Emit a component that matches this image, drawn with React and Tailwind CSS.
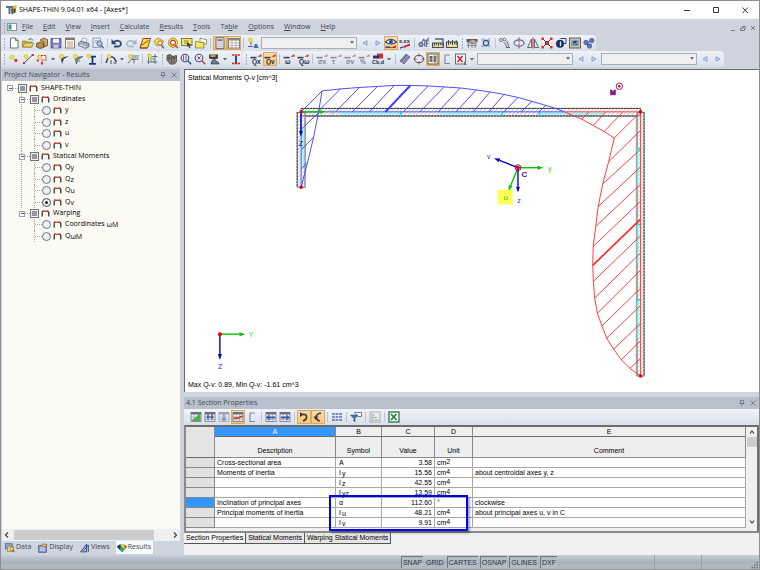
import React from "react";

const UI = "font-['Open_Sans',sans-serif]";
const ARIAL = "font-['Liberation_Sans',Arial,sans-serif]";

/* ---------- small toolbar glyphs, drawn on a 14 x 14 grid ---------- */
const spark = (x, y) => (
  <g>
    <circle cx={x} cy={y} r="2" fill="#f3e64a" stroke="#b9a520" strokeWidth=".5" />
  </g>
);
const redWedge = <path d="M1.500 4.800h7L12.500 2v2.800z" fill="#c8332e" />;
const darkBar = <rect x="1.500" y="4.800" width="6" height="1.600" fill="#39405a" />;
const sub = (label, color = "#26304c") => (
  <text x="3" y="12.200" fontSize="6.500" fontWeight="bold" fill={color} fontFamily="Liberation Sans, sans-serif">{label}</text>
);
const sheet = (
  <g>
    <rect x="2" y="2.500" width="10" height="9" fill="#eef0f4" stroke="#6d7480" strokeWidth=".8" />
    <path d="M2 4.500h10M2 7h10M2 9.300h10M5.200 2.500v9M8.600 2.500v9" stroke="#8c93a0" strokeWidth=".6" />
    <rect x="2" y="2.300" width="10" height="1.600" fill="#5d6470" />
  </g>
);

const glyphs = {
  app: <g><path d="M1 3h7v2H5.500v6H3.500V5H1z" fill="#5b6f97" /><path d="M6 4.500l5-2.500v7l-4 2.500z" fill="#8a7a5a" /><path d="M8 4l3-2 1.500 2-3 2z" fill="#e9c63c" /><path d="M7 6v5M9.500 6v4" stroke="#3e3a30" /></g>,
  doc: <path d="M3.500 2h5l2.500 2.500V12H3.500zM8.500 2v2.500H11" fill="#fff" stroke="#4d5462" strokeWidth=".8" />,
  open: <g><path d="M1.500 11V5h3.500l1 1h5v5z" fill="#d9b63a" stroke="#7c6412" strokeWidth=".6" /><path d="M1.500 11l2.500-4h9l-2.500 4z" fill="#f0d568" stroke="#7c6412" strokeWidth=".6" /><path d="M7.500 3.500q3-2.500 4.500 1" fill="none" stroke="#3a6a38" strokeWidth="1" /></g>,
  box: <g><path d="M1.500 7.500l4-1.500 3 1v4.500l-3.500 1-3.500-1.500z" fill="#b98d43" stroke="#4f3a14" strokeWidth=".7" /><path d="M5 4l4-2 3.500 1.500v6L9 11V6z" fill="#d9a856" stroke="#4f3a14" strokeWidth=".7" /></g>,
  save: <g><rect x="2" y="2.500" width="10" height="9.500" fill="#7a76b4" stroke="#4b4786" strokeWidth=".7" /><rect x="4" y="2.800" width="6" height="4" fill="#f2f3f8" /><rect x="4.500" y="8.500" width="5" height="3.300" fill="#c5c7dc" /></g>,
  list: <g><rect x="2.500" y="2" width="9" height="10" fill="#fbf7ec" stroke="#6e655a" strokeWidth=".8" /><rect x="2.500" y="2" width="9" height="2" fill="#8a7766" /><path d="M4 6h6M4 8h6M4 10h6" stroke="#a48f7b" strokeWidth=".8" /></g>,
  print: <g><path d="M4 6l2-4 4 1-1 4z" fill="#fff" stroke="#777e92" strokeWidth=".6" /><path d="M1.500 7l3-2 7.500 2.500v3L8.500 12.500l-7-3z" fill="#a7aebf" stroke="#515a72" strokeWidth=".7" /><path d="M3 9l5.500 2" stroke="#e9ecf4" /></g>,
  preview: <g><rect x="2" y="2" width="7.500" height="9.500" fill="#e6ecf5" stroke="#76819a" strokeWidth=".7" /><path d="M3.500 4.500h4M3.500 6.500h3" stroke="#8fa0bd" strokeWidth=".7" /><circle cx="8.500" cy="7.500" r="2.600" fill="#a9c4e8" stroke="#49648f" strokeWidth=".9" /><path d="M10.300 9.500l2.200 2.700" stroke="#49648f" strokeWidth="1.400" /></g>,
  undo: <g><path d="M3.500 6.500q3.500-3.500 7-.500 1.500 3.500-2 4.500H4" fill="none" stroke="#2c4a79" strokeWidth="1.800" /><path d="M1.500 3v5.200h5.200z" fill="#2c4a79" /></g>,
  redo: <g><path d="M10.500 6.500q-3.500-3.500-7-.500-1.500 3.500 2 4.500H10" fill="none" stroke="#a7b5c9" strokeWidth="1.600" /><path d="M12.500 3v5.200H7.300z" fill="#a7b5c9" /></g>,
  para: <g><path d="M2 12l3-9.500h7.500l-3 9.500z" fill="#f7e548" stroke="#3a3626" strokeWidth=".8" /><path d="M3 9.500L10.500 4.500" stroke="#ca2920" strokeWidth="1" /><path d="M5 2.500h7.500M2 12h7" stroke="#ca2920" strokeWidth="1.100" /></g>,
  lens: <g><path d="M2 5l4-3 5.500 3-2 4-5 .5z" fill="#f7e548" stroke="#8c7a1c" strokeWidth=".7" /><circle cx="8" cy="7" r="2.200" fill="#fff6b0" stroke="#a63f2a" strokeWidth=".8" /><path d="M9.500 9l2.500 3.300" stroke="#6b5a30" strokeWidth="1.300" /></g>,
  target: <g><circle cx="7" cy="6.700" r="4.600" fill="#f7e548" stroke="#a1861c" strokeWidth=".9" /><circle cx="7" cy="6.700" r="2.400" fill="#fff" stroke="#c73227" strokeWidth="1.100" /><path d="M9 9.500l3 2.500" stroke="#c73227" strokeWidth="1.200" /></g>,
  screen: <g><rect x="1.500" y="2.500" width="10.500" height="7" fill="#f5e761" stroke="#6b6325" strokeWidth=".8" /><path d="M4 5h5M4 7h3" stroke="#6b6325" strokeWidth=".7" /><path d="M7 6l4.500 3-2 .3 1 2.500-1.200.4-1-2.400L7 11z" fill="#3d4252" /></g>,
  folders: <g><path d="M1.500 5.500h3l1 1H10V12H1.500z" fill="#f4e466" stroke="#7d7123" strokeWidth=".7" /><path d="M6 2.500h2.500l.8.8H12.500V8H10V6.500H6z" fill="#fff" stroke="#7d7123" strokeWidth=".7" /></g>,
  calc: <g><rect x="3" y="1.800" width="8" height="10.500" fill="#f6f6f6" stroke="#55545a" strokeWidth=".9" /><rect x="4.300" y="3.200" width="5.400" height="2" fill="#75808c" /><path d="M4.500 6.800h5M4.500 8.600h5M4.500 10.400h5" stroke="#777" strokeWidth=".9" strokeDasharray="1 1" /></g>,
  table: <g><rect x="1.500" y="2.500" width="11" height="9.500" fill="#fff" stroke="#6a6660" strokeWidth=".8" /><rect x="1.500" y="2.500" width="11" height="2" fill="#8b857c" /><path d="M1.500 7h11M1.500 9.500h11M5 4v8M9 4v8" stroke="#958f87" strokeWidth=".6" /></g>,
  load: <g>{spark(4.500, 4)}<path d="M5 6v3M2 10.500h5" stroke="#566078" strokeWidth="1" /><path d="M7.500 12L9 8h2l1.500 4z" fill="#4d6fae" /></g>,
  eye: <g><path d="M1.500 6q5-5.500 11 0-5 4-11 0z" fill="#fff" stroke="#243a70" strokeWidth="1.100" /><circle cx="7" cy="5.700" r="2" fill="#2c4b95" /><path d="M2 12h3.500l6.500-2.500V12z" fill="#c7322a" /><path d="M1.500 10.500h5V12h-5z" fill="#2c4b95" /></g>,
  xxx: <g><text x="1" y="6.500" fontSize="5.500" fontWeight="bold" fill="#26304c" fontFamily="Liberation Sans, sans-serif">x.xx</text><path d="M2 11.500L12 7.500v2.200L7 11.500z" fill="#c8332e" /><path d="M2 11h4l-4 2z" fill="#3c5ea8" /></g>,
  cut: <g><path d="M5 6.500l1.500-3 1.500 1-.5 6M9 5l3-3M9.500 11V5h2.500M9.500 7.500h2" fill="none" stroke="#5c6a8e" strokeWidth="1.200" /><circle cx="4" cy="8.500" r="2.200" fill="#8d9ab8" stroke="#3c4968" strokeWidth=".7" /></g>,
  ruler1: <g><path d="M4 3h8v4" fill="none" stroke="#555c6a" strokeWidth="1.300" /><rect x="1.500" y="7" width="11" height="4.500" fill="#e9d98e" stroke="#343d55" strokeWidth=".9" /><path d="M3.500 7v3M5.500 7v2M7.500 7v3M9.500 7v2M11.200 7v3" stroke="#343d55" strokeWidth=".8" /></g>,
  ruler2: <g><rect x="1.500" y="6" width="11" height="5.500" fill="#e9e08e" stroke="#343d55" strokeWidth=".9" /><path d="M3.500 4v5M5.500 6v2M7.500 4v5M9.500 6v2M11.200 4v5" stroke="#343d55" strokeWidth=".9" /></g>,
  hand: <g><rect x="1.500" y="3" width="11" height="3" fill="#555b66" /><path d="M2 7h10M2 9.500h10M3.500 6v6M7 6v6M10 6v6" stroke="#7c8290" strokeWidth=".9" /><path d="M3.500 5q4-3 8.500 0l-3 2.500-3.500-1z" fill="#d4ab87" stroke="#5a4a3a" strokeWidth=".6" /></g>,
  gear: <g><path d="M2 4h10M2 10h10M4 2v10M10 2v10" stroke="#767e92" strokeWidth=".8" strokeDasharray="1.500 1" /><circle cx="7" cy="7" r="2.600" fill="#cfd9ee" stroke="#355294" strokeWidth="1.100" /></g>,
  link: <g><circle cx="3" cy="4" r="1.500" fill="#fff" stroke="#4b4f5a" strokeWidth=".8" /><circle cx="6.500" cy="3.500" r="1.300" fill="#fff" stroke="#4b4f5a" strokeWidth=".8" /><path d="M8 4.500q2.500 2 2.500 6M5.500 6.500q2.500 0 3 4.500M8 11.500h4" fill="none" stroke="#4b4f5a" strokeWidth=".9" /></g>,
  spin: <g><ellipse cx="7" cy="7" rx="5" ry="3.200" fill="none" stroke="#4f6ea6" strokeWidth="1.200" /><path d="M7 1.500v11" stroke="#c8332e" strokeWidth="1.100" strokeDasharray="2 1" /></g>,
  mirror: <g><path d="M1.500 11.500L5.500 3v8.500zM12.500 11.500L8.500 3v8.500z" fill="#e8eaf0" stroke="#555b6a" strokeWidth=".9" /><path d="M7 1.500v11" stroke="#c8332e" strokeWidth="1.100" /></g>,
  scale: <g><path d="M2.500 2.500l9 9M11.500 2.500l-9 9" stroke="#3c3f48" strokeWidth="1" /><path d="M1.500 1.500h2.400v2.400H1.500zM10.100 1.500h2.400v2.400h-2.400zM1.500 10.100h2.400v2.400H1.500zM10.100 10.100h2.400v2.400h-2.400z" fill="#e02a20" /><rect x="5.200" y="5.200" width="3.600" height="3.600" fill="#c23a34" stroke="#5a2826" strokeWidth=".5" /></g>,
  sphere: <g><path d="M6.500 2.500h5.500v5H9" fill="#e9ebf2" stroke="#202a5a" strokeWidth=".9" /><circle cx="6" cy="7.800" r="4" fill="#1f2b66" /><path d="M6.500 5.500v4.500" stroke="#dfe5ff" strokeWidth="1.300" /></g>,
  photo: <g><rect x="1.500" y="2" width="11" height="10" fill="#d8c79d" stroke="#585040" strokeWidth=".9" /><rect x="3" y="3.800" width="8" height="6.500" fill="#86a1cf" /><circle cx="7.300" cy="7" r="2.300" fill="#27406f" /><path d="M6 7.500l1.200 1 2-2.500" stroke="#fff" strokeWidth=".7" fill="none" /></g>,
  balls: <g fill="#6781b8" stroke="#2f457c" strokeWidth=".7"><circle cx="4" cy="6.500" r="2.200" /><circle cx="9.800" cy="4.500" r="2.200" /><circle cx="7.500" cy="10" r="2.200" /><path d="M5 7l3-2M5 8l2 1" /></g>,

  node: <g>{spark(5, 5)}<rect x="7.500" y="7" width="2.800" height="2.800" fill="#d8261c" /></g>,
  line: <g><path d="M3 11L11.500 3" stroke="#4b4f5c" strokeWidth="1" />{spark(5, 4.500)}<rect x="2" y="10" width="2" height="2" fill="#d8261c" /><rect x="10.800" y="2" width="2" height="2" fill="#d8261c" /></g>,
  poly: <g><path d="M3 3.500h8v4.500H7v3.500" fill="none" stroke="#d8261c" strokeWidth="1.100" strokeDasharray="2 1" />{spark(4.500, 5)}<rect x="1.800" y="7.500" width="2" height="2" fill="#d8261c" /><rect x="6" y="10.500" width="2" height="2" fill="#d8261c" /></g>,
  elem: <g><path d="M4 5.500l8-1.500-5 3-2 5-1-4z" fill="#454a56" />{spark(4.500, 4.500)}</g>,
  elem2: <g><path d="M4 5.500l8-1-5 3-1.500 4.500z" fill="#7d828e" stroke="#454a56" strokeWidth=".6" />{spark(4.500, 4.500)}<path d="M7 7l2 3" stroke="#4b9a45" strokeWidth="1" /></g>,
  ibeam: <g><path d="M4 4.700h7M7.500 4v8M4 11.800h7" stroke="#20347c" strokeWidth="1.800" fill="none" />{spark(4, 4)}</g>,
  arc: <g><path d="M2 11l2-5q3-2.500 6 0l2.500 4" fill="none" stroke="#3d424f" strokeWidth="1.500" />{spark(5, 4.500)}<path d="M7 8v4M9.500 11h3" stroke="#3d424f" strokeWidth="1" /></g>,
  tag: <g><path d="M2 11.500l3-4h3v4" fill="none" stroke="#646b7a" strokeWidth="1" />{spark(4.500, 4.500)}<text x="6" y="6" fontSize="4.500" fill="#3d424f" fontFamily="Liberation Sans, sans-serif">xxx</text><path d="M6 7.200h6.500" stroke="#3d424f" strokeWidth=".8" /></g>,
  gridadd: <g><path d="M3.500 2v10M10 2v10M2 10h10.500M5 4.500h7.500" stroke="#646b7a" strokeWidth=".9" />{spark(4.500, 4)}<rect x="6" y="6.500" width="3" height="3" fill="none" stroke="#56954c" strokeWidth=".7" /></g>,
  shear: <g><path d="M2 3.500l3-1 3 2 3.500-1v6l-2 2.500H5L2 8z" fill="#8f887e" stroke="#3f3b36" strokeWidth=".8" /><path d="M4 3v6M6.500 4v7M9 4v7M2 6h9" stroke="#3f3b36" strokeWidth=".7" /></g>,
  zoomBlue: <g><circle cx="6" cy="6" r="3.800" fill="#dbe8fa" stroke="#33539a" strokeWidth="1.100" /><path d="M8.800 8.800l3.400 3.500" stroke="#33539a" strokeWidth="1.500" /><path d="M4.500 3.500v5M7 3.500v5" stroke="#c23a34" strokeWidth=".9" /></g>,
  zoomRed: <g><circle cx="6" cy="6" r="3.800" fill="#f4e9f2" stroke="#33539a" strokeWidth="1.100" /><path d="M8.800 8.800l3.400 3.500" stroke="#c23a34" strokeWidth="1.500" /><path d="M4.500 4.500l3 3M7.500 4.500l-3 3" stroke="#c23a34" strokeWidth="1" /></g>,
  visib: <g><path d="M2 2.500h9v4l-4 1-5-1z" fill="#3c3f48" /><path d="M3.500 4h5" stroke="#f3e64a" strokeWidth="1.300" /><path d="M4 12q0-4 3.500-4.500L12 11v1z" fill="#737986" stroke="#30333b" strokeWidth=".6" /></g>,
  clip: <g><path d="M3 3h8M3 11.500h8" stroke="#d8261c" strokeWidth="1.700" strokeDasharray="2.500 .5" /><path d="M7 4v7" stroke="#24439c" strokeWidth="1.900" /></g>,
  sigma: <g>{redWedge}{darkBar}{sub("Qx")}</g>,
  qv: <g>{redWedge}{darkBar}{sub("Qv")}</g>,
  omega: <g>{redWedge}{darkBar}{sub("ω")}</g>,
  qomega: <g>{redWedge}{darkBar}{sub("Qω")}</g>,
  fsx: <g opacity=".55">{redWedge}{darkBar}{sub("σx")}</g>,
  ftau: <g opacity=".55">{redWedge}{darkBar}{sub("τ")}</g>,
  fsv: <g opacity=".55">{redWedge}{darkBar}{sub("σv")}</g>,
  fpc: <g opacity=".55">{redWedge}{darkBar}{sub("%")}</g>,
  cbd: <g><rect x="6" y="1.500" width="6" height="5" fill="#c8332e" /><rect x="2" y="3.500" width="6" height="3" fill="#26366e" /><text x="1" y="12.200" fontSize="5.500" fontWeight="bold" fill="#26304c" fontFamily="Liberation Sans, sans-serif">Cb,d</text></g>,
  hatch: <g><path d="M2 9l6-7 4 3-6 7z" fill="#8fa6d6" stroke="#4f5b78" strokeWidth=".8" /><path d="M5.500 10.500l5-6" stroke="#c8332e" strokeWidth=".9" /><path d="M3.500 9.500l5.500-6.500" stroke="#26366e" strokeWidth=".8" /></g>,
  ellipse: <g><ellipse cx="7" cy="7" rx="4.500" ry="3.600" fill="none" stroke="#4b4f5c" strokeWidth="1" /><path d="M7 1.500v3M7 9.500v3M1.500 7h3M9.500 7h3" stroke="#c8332e" strokeWidth="1" /></g>,
  palette: <g><rect x="2" y="2" width="10" height="10" fill="#fff" stroke="#4b4536" strokeWidth=".9" /><rect x="3.500" y="4" width="3" height="2" fill="#3565bd" /><rect x="3.500" y="6" width="3" height="2" fill="#48a650" /><rect x="3.500" y="8" width="3" height="2" fill="#d4402c" /><rect x="7.500" y="3.500" width="3" height="7" fill="#77756b" /></g>,
  bracket: <path d="M10 3H5v8.500h5" fill="none" stroke="#838a96" strokeWidth="1.200" />,
  redx: <g><rect x="1.500" y="2" width="10" height="10" fill="#f2f2f4" stroke="#5b606d" strokeWidth=".9" /><path d="M3.500 4l5 6M8.500 4l-5 6" stroke="#cf1f2e" strokeWidth="1.500" /><path d="M10.500 9.500v3h2" stroke="#5b606d" fill="none" strokeWidth=".8" /></g>,

  tGreen: <g>{sheet}<path d="M2.500 11L11.500 3v8z" fill="#4fae4b" /></g>,
  tDown: <g>{sheet}<path d="M5 4.500v5M9 4.500v5M3.500 7h7" stroke="#2d4a92" strokeWidth="1.200" /></g>,
  tFade: <g opacity=".6">{sheet}<path d="M7 4v6M5 8l2 2.500L9 8" stroke="#2d4a92" strokeWidth="1.200" fill="none" /></g>,
  tRed: <g>{sheet}<path d="M2.500 8h5l4-2" stroke="#c8332e" strokeWidth="1.500" fill="none" /></g>,
  tLeft: <g>{sheet}<path d="M2 7.500l3.500-3v2H11v2H5.500v2z" fill="#3a60b4" /></g>,
  tRight: <g>{sheet}<path d="M12 7.500l-3.500-3v2H3v2h5.500v2z" fill="#3a60b4" /></g>,
  curveR: <g><path d="M5 4.500q5-1 4.500 3Q9 10 6 11" fill="none" stroke="#3c3a36" strokeWidth="1.700" /><path d="M3 2l3.500 2.500L3 7z" fill="#3c3a36" /></g>,
  curveL: <g><path d="M10 3Q5 4 5 7.500q1 3 4 3.500" fill="none" stroke="#3c3a36" strokeWidth="1.700" /><path d="M2.500 6.500h5L4.500 10z" fill="#3c3a36" /></g>,
  tCols: <g><path d="M2 4h10M2 7h10M2 10h10" stroke="#5a6ab0" strokeWidth="1.700" /><path d="M5.300 3v8.500M8.600 3v8.500" stroke="#e6e9f2" strokeWidth=".8" /></g>,
  filter: <g><path d="M5.500 2.500h7v4h-4z" fill="#fff" stroke="#5c6272" strokeWidth=".8" /><path d="M1.500 5h7.500L6 8.500V12L4.800 11V8.500z" fill="#3a7ac0" stroke="#29446f" strokeWidth=".5" /></g>,
  tStep: <g opacity=".65"><rect x="2" y="2" width="10" height="10" fill="#eef4ee" stroke="#6f7b76" strokeWidth=".8" /><path d="M4 3v8M4 5h3M4 7.500h5M4 10h7" stroke="#697" strokeWidth="1" /></g>,
  excel: <g><rect x="2" y="2" width="10" height="10" fill="#fff" stroke="#1f7a3c" strokeWidth="1.300" /><path d="M4 4l5.500 6M9.500 4L4 10" stroke="#1f7a3c" strokeWidth="1.700" /></g>,

  data: <g><rect x="1.500" y="2" width="8" height="6" fill="#8fa8da" stroke="#3c5898" strokeWidth=".8" /><path d="M4 5h7v6H4z" fill="#f2da6a" stroke="#806b1c" strokeWidth=".7" /><circle cx="9" cy="8" r="2" fill="#fff3b0" stroke="#8c3030" strokeWidth=".7" /><path d="M10.300 9.500l2 2.500" stroke="#333" /></g>,
  display: <g><rect x="2" y="4" width="9" height="8" fill="#7f9ad2" stroke="#35508e" strokeWidth=".8" /><path d="M3.500 7h6M3.500 9.500h6" stroke="#fff" /><path d="M4 4q4-3.500 8-1l-2 3-4-.5z" fill="#e2a57c" stroke="#7a4e2c" strokeWidth=".6" /></g>,
  views: <g><path d="M2 11.500L9 2.500v9z" fill="#aebfe6" stroke="#28427f" strokeWidth="1.100" /><path d="M5.500 10l5.500-6.500v8" fill="none" stroke="#28427f" strokeWidth="1" /></g>,
  results: <g><path d="M1 5.500Q7 0 13 5.500L7 12z" fill="#32a84a" /><path d="M1 5.500Q3 3 5.500 2.700L5 9.500z" fill="#24348a" /><path d="M5.500 2.700Q10 2 13 5.500L10 8 6 5z" fill="#e6d832" /><path d="M9.500 3.200Q11.500 4 13 5.500L10.500 8z" fill="#d8402a" /><path d="M4.500 7.500L7 12l2.500-3z" fill="#2a9ad0" /></g>,
};

function Glyph({ name, small }) {
  return <svg viewBox="0 0 14 14" className={small ? "h-3 w-3" : "h-[14px] w-[14px]"} aria-hidden="true">{glyphs[name]}</svg>;
}

function Tool({ name, active }) {
  return (
    <button
      aria-label={name}
      className={`h-[14px] w-[14px] flex-none ${active ? "bg-gradient-to-b from-[#fbdcae] to-[#fdc46a] outline outline-1 -outline-offset-1 outline-[#d3ab6c]" : ""}`}
    >
      <Glyph name={name} />
    </button>
  );
}

const Sep = () => <span className="mx-[2px] h-[10px] w-px flex-none bg-[#bcc4d2]" />;
const Grip = () => (
  <span className="flex h-full w-[6px] flex-none flex-col items-center justify-center gap-px">
    {[0, 1, 2, 3].map((i) => <i key={i} className="h-[2px] w-px bg-[#a5aec0]" />)}
  </span>
);
const Drop = () => (
  <button aria-label="More" className="flex h-[14px] w-2 flex-none items-center justify-center">
    <svg viewBox="0 0 4 3" className="h-[3px] w-1"><path d="M0 0h4L2 2.500z" fill="#5c6270" /></svg>
  </button>
);
const Step = ({ dir }) => (
  <button aria-label={dir < 0 ? "Previous" : "Next"} className="flex h-[14px] w-[13px] flex-none items-center justify-center">
    <svg viewBox="0 0 6 6" className="h-[6px] w-[6px]">
      <path d={dir < 0 ? "M5 .8L1 3l4 2.200z" : "M1 .8L5 3 1 5.200z"} fill="#cbdcf8" stroke="#7a98d4" strokeWidth=".9" />
    </svg>
  </button>
);
function Combo({ label }) {
  return (
    <span className="relative mx-px h-3 w-24 min-w-8">
      <select aria-label={label} className="block h-full w-full appearance-none border border-[#a9afb9] bg-[#efefef]" />
      <svg viewBox="0 0 4 3" className="pointer-events-none absolute top-1 right-[3px] h-[3px] w-1"><path d="M0 0h4L2 3z" fill="#6d7380" /></svg>
    </span>
  );
}

function Tools({ items }) {
  return items.map((it, i) => {
    if (it === "|") return <Sep key={i} />;
    if (it === "v") return <Drop key={i} />;
    if (it === "<") return <Step key={i} dir={-1} />;
    if (it === ">") return <Step key={i} dir={1} />;
    if (it === "combo") return <Combo key={i} label={`Selection ${i}`} />;
    const active = it[0] === "*";
    return <Tool key={i} name={active ? it.slice(1) : it} active={active} />;
  });
}

function Strip({ items }) {
  return (
    <div className="flex h-4 min-w-0 items-center rounded-r-sm bg-gradient-to-b from-[#eef2f9] to-[#d9dfea]">
      <Grip />
      <Tools items={items} />
    </div>
  );
}

const bar1a = ["doc", "open", "box", "save", "list", "print", "preview", "|", "undo", "redo", "para", "lens", "target", "screen", "folders", "|", "*calc", "*table", "|", "load", "combo", "<", ">", "*eye", "xxx", "|", "cut", "ruler1", "ruler2"];
const bar1b = ["hand", "gear", "|", "link", "spin", "mirror", "scale", "sphere", "photo", "balls"];
const bar2a = ["node", "line", "poly", "v", "elem", "elem2", "ibeam", "|", "arc", "v", "tag", "|", "gridadd"];
const bar2b = ["shear", "zoomBlue", "zoomRed", "visib", "v", "clip"];
const bar2c = ["sigma", "*qv", "|", "omega", "qomega", "|", "fsx", "ftau", "fsv", "fpc", "cbd", "v", "|", "hatch", "ellipse", "*palette", "bracket", "redx", "v", "combo", "<", ">", "combo", "<", ">"];
const gridTools = ["tGreen", "tDown", "tFade", "*tRed", "bracket", "|", "tLeft", "tRight", "|", "*curveR", "*curveL", "|", "tCols", "|", "filter", "|", "tStep", "|", "excel"];

function TitleBar() {
  return (
    <header className={`flex h-[18px] flex-none items-center bg-white pl-1 ${UI}`}>
      <Glyph name="app" />
      <h1 className="text-[7px] leading-3 text-black">SHAPE-THIN 9.04.01 x64 - [Axes*]</h1>
      <div className="ml-auto flex">
        {["M1 4.500h6", "M1.500 1.500h5v5h-5z", "M1.500 1.500l5.500 5.500M7 1.500L1.500 7"].map((d, i) => (
          <button key={d} aria-label={["Minimize", "Maximize", "Close"][i]} className="flex w-[29px] justify-center">
            <svg viewBox="0 0 8 8" className="h-2 w-2"><path d={d} fill="none" stroke="#222" strokeWidth=".9" /></svg>
          </button>
        ))}
      </div>
    </header>
  );
}

function MenuBar() {
  return (
    <nav className={`flex h-4 flex-none items-center bg-[#cfd3dd] text-[7px] text-[#3c4454] ${UI}`}>
      <Grip />
      <svg viewBox="0 0 10 8" className="h-2 w-[10px]"><rect x=".5" y=".5" width="9" height="7" fill="#fff" stroke="#8a93a4" /><rect x="1.500" y="1.500" width="3" height="5" fill="#3f9a86" /></svg>
      <div className="flex">
        {["File", "Edit", "View", "Insert", "Calculate", "Results", "Tools", "Table", "Options", "Window", "Help"].map((m) => (
          <button key={m} className="px-[5px] leading-3">
            {m === "Table" ? <>Ta<u>b</u>le</> : <><u>{m[0]}</u>{m.slice(1)}</>}
          </button>
        ))}
      </div>
      <div className="ml-auto flex gap-1 pt-[2px] pr-[3px]">
        {["M1 5.500h4", "M2 1.500h4v3M.500 3h4v2.500h-4z", "M1 1l4 4M5 1L1 5"].map((d, i) => (
          <button key={d} aria-label={["Minimize view", "Restore view", "Close view"][i]}>
            <svg viewBox="0 0 6 6" className="h-[6px] w-[6px]"><path d={d} fill="none" stroke="#747a86" /></svg>
          </button>
        ))}
      </div>
    </nav>
  );
}

function PanelHead({ title }) {
  return (
    <div className={`flex h-3 flex-none items-center bg-[#b9c0cc] pr-[3px] pl-[2px] text-[7px] text-[#3f4756] ${UI}`}>
      <h2>{title}</h2>
      <div className="ml-auto flex gap-[5px]">
        <button aria-label={`Pin ${title}`}><svg viewBox="0 0 6 6" className="h-[6px] w-[6px]"><path d="M1.500.5h3v3h-3zM.5 3.500h5M3 3.500V6" fill="none" stroke="#69707e" strokeWidth=".8" /></svg></button>
        <button aria-label={`Close ${title}`}><svg viewBox="0 0 6 6" className="h-[6px] w-[6px]"><path d="M.5.5l5 5M5.500.5l-5 5" stroke="#69707e" strokeWidth=".8" /></svg></button>
      </div>
    </div>
  );
}

const Frame = () => (
  <svg viewBox="0 0 9 7" className="h-[7px] w-[9px] flex-none"><path d="M1.200 6.500V1.500M7.800 6.500V2.500L6.500 1" fill="none" stroke="#343434" strokeWidth="1.300" /><path d="M1 1.200h6" stroke="#8c1f1a" strokeWidth="1.100" /><path d="M1 1.200h1.500M6 1.200h1.500" stroke="#e8352c" strokeWidth="1.300" /></svg>
);
const Minus = () => (
  <button aria-label="Collapse" className="flex h-[6px] w-[6px] flex-none items-center justify-center border border-[#9aa2b4] bg-white"><i className="h-px w-[3px] bg-[#4b64a6]" /></button>
);
function Tick({ id }) {
  return <input id={id} type="checkbox" defaultChecked className="h-[9px] w-[9px] flex-none appearance-none border border-[#6f747c] bg-[#94989e] shadow-[inset_0_0_0_1px_#f0f0f0]" />;
}
const Stub = () => <i className="w-[5px] flex-none border-t border-dotted border-[#a8a8a0]" />;

function Group({ title, items, last }) {
  return (
    <li className={`ml-3 border-l border-dotted ${last ? "border-transparent" : "border-[#a8a8a0]"}`}>
      <div className="-ml-[3px] flex h-[11px] items-center">
        <Minus />
        <Stub />
        <Tick id={title} />
        <label htmlFor={title} className="ml-[2px] flex items-center gap-[3px]"><Frame />{title}</label>
      </div>
      <ul className="ml-3">
        {items.map(([key, text, s]) => (
          <li key={key} className="flex h-[11px] items-center border-l border-dotted border-[#a8a8a0] even:h-3">
            <i className="w-[7px] flex-none border-t border-dotted border-[#a8a8a0]" />
            <input id={key} type="radio" name="result" defaultChecked={key === "Qv"} className="h-[9px] w-[9px] flex-none appearance-none rounded-full border border-[#70757d] bg-[#eef1f6] checked:bg-[#202020] checked:shadow-[inset_0_0_0_2px_#f4f6fa]" />
            <label htmlFor={key} className="ml-[2px] flex items-center gap-[3px]"><Frame /><span>{text}{s && <span className="relative top-px">{s}</span>}</span></label>
          </li>
        ))}
      </ul>
    </li>
  );
}

function Navigator() {
  return (
    <aside className="flex w-[178px] flex-none flex-col">
      <PanelHead title="Project Navigator - Results" />
      <div className={`min-h-0 flex-1 bg-[#fcfbf3] pt-px pl-1 text-[7px] text-black ${UI}`}>
        <div className="flex h-3 items-center pl-px">
          <Minus />
          <Stub />
          <Tick id="root" />
          <label htmlFor="root" className="ml-[2px] flex items-center gap-[3px]"><Frame />SHAPE-THIN</label>
        </div>
        <ul className="ml-[3px]">
          <Group title="Ordinates" items={[["y", "y"], ["z", "z"], ["u", "u"], ["v", "v"]]} />
          <Group title="Statical Moments" items={[["Qy", "Q", "y"], ["Qz", "Q", "z"], ["Qu", "Q", "u"], ["Qv", "Q", "v"]]} />
          <Group title="Warping" last items={[["CwM", "Coordinates ", "ωM"], ["QwM", "Q", "ωM"]]} />
        </ul>
      </div>
      <div className="flex h-3 flex-none items-center bg-[#f0f0f0] px-[2px]">
        <button aria-label="Scroll left" className="w-[10px]"><svg viewBox="0 0 6 6" className="h-[6px] w-[6px]"><path d="M4 .5L1.500 3 4 5.500" fill="none" stroke="#444" strokeWidth="1.200" /></svg></button>
        <div className="h-[10px] flex-1 pr-[14px]"><div className="h-full bg-[#cdcdcd]" /></div>
        <button aria-label="Scroll right" className="flex w-[10px] justify-end"><svg viewBox="0 0 6 6" className="h-[6px] w-[6px]"><path d="M2 .5L4.500 3 2 5.500" fill="none" stroke="#444" strokeWidth="1.200" /></svg></button>
      </div>
      <div className={`flex h-[14px] flex-none items-start gap-[6px] bg-[#cfd5df] pl-[2px] text-[7px] text-[#3f4756] ${UI}`}>
        {[["data", "Data"], ["display", "Display"], ["views", "Views"], ["results", "Results"]].map(([g, t]) => (
          <button key={t} className={`flex h-[13px] items-center ${t === "Results" ? "bg-[#f6fafc] pr-[2px]" : ""}`}><Glyph name={g} small />{t}</button>
        ))}
      </div>
    </aside>
  );
}

/* ---------- section plot ---------- */
const blueCurve = "M301.500 112L322.500 91 341 89 360 87.500 378 86.500 395 85.500 411 85.500 429 86 445 87 461 88 477 90 491 92 505 94.500 520 97.800 533 101.500 547 105.500 558 109 566 112.300";
const blueLeft = "M322.500 91L319 112 314 137.500 308 162.500 301.500 187.500V112";
const blueHatch = "M341 89L319 111M360 87.500L336 112M378 86.500L353 112M395 85.500L370 112M429 86L404 112M445 87L420.500 112M461 88L439 112M477 90L457 112M491 92L474 112M505 94.500L490 112M519 97.500L505 112M533 101.500L522 112M547 105.500L540 112M319 113L302 129M314 137.500L302 149.500M308 162.500L302 169";
const redCurve = "M566 112.300L583 119.300 594.500 125.700 605.500 131.700 615.500 138.300 610 162 604 184.300 599.500 207 597 227 594.500 247 594 266 594.700 282.500 596 299 598.700 314 603.300 327 608 339 615 350 622.700 360.700 631.300 369.300 642 377V112H566";
const redHatch = "M590 112.500L583 119.300M606.500 112.500L594.500 125.700M624 112.500L605.500 131.700M641.500 112.500L615.500 138.300M610 162L641.500 131M604 184.300L641.500 150M599.500 207L641.500 167.700M597 227L641.500 185M594.500 247L641.500 202M594.700 282L641.500 236.700M596 298.700L641.500 254M598.700 314L641.500 271.300M603.300 326.700L641.500 289.300M608 339L641.500 306.700M615 350L641.500 324.700M622.700 360.700L641.500 342M631.300 369.300L641.500 360";

function Arrow({ x1, y1, x2, y2, color }) {
  const a = Math.atan2(y2 - y1, x2 - x1);
  const bx = x2 - 6 * Math.cos(a);
  const by = y2 - 6 * Math.sin(a);
  const px = 2 * Math.sin(a);
  const py = -2 * Math.cos(a);
  return (
    <g>
      <line x1={x1} y1={y1} x2={bx} y2={by} stroke={color} strokeWidth="1.400" />
      <polygon points={`${x2},${y2} ${bx + px},${by + py} ${bx - px},${by - py}`} fill={color} />
    </g>
  );
}

function Plot() {
  const BLUE = "#0000c8";
  const GREEN = "#00c400";
  return (
    <svg viewBox="185 70 574 323" preserveAspectRatio="xMinYMin meet" className="absolute inset-0 h-full w-full" role="img" aria-label="Statical moments diagram" fontFamily="Liberation Sans, sans-serif" fontSize="7">
      <defs>
        <pattern id="mat" width="4" height="4" patternUnits="userSpaceOnUse"><path d="M0 4L4 0" stroke="#9a9a9a" strokeWidth=".7" /></pattern>
      </defs>
      <g fill="url(#mat)" stroke="#6a6a6a" strokeWidth=".9">
        <rect x="297.500" y="112.500" width="8" height="75" />
        <rect x="638.500" y="112.500" width="7" height="264.500" />
        <rect x="301.500" y="108.500" width="340.500" height="7.500" />
      </g>
      <path d="M305.500 116V187M306 116H638M638 116V377" stroke="#a4a4a4" strokeWidth="1.600" fill="none" />
      <path d="M301.500 108.500H642M297.500 112.500V187.500M645.500 112.500V377M306 116.200H638" stroke="#222" strokeWidth=".8" strokeDasharray="2 1" fill="none" />
      <path d="M340 114H402M440 114H504M540 114H604M303.500 129V168M639.500 148V186M639.500 225V263M639.500 301V339" stroke="#7ff" strokeWidth="2" opacity=".75" fill="none" />
      <path d="M401.500 112v4M503.500 112v4M540.500 112v4M638 149h4M638 225h4M638 300.500h4" stroke="#00e5ee" strokeWidth="1.500" />
      <g fill="none" stroke="#3a3aff" strokeWidth=".9">
        <path d={blueCurve} /><path d={blueLeft} /><path d={blueHatch} />
        <path d="M301 112H566" />
        <path d="M411 85.500L386 112" strokeWidth="2" />
      </g>
      <g fill="none" stroke="#ff2a2a" strokeWidth=".9">
        <path d={redCurve} /><path d={redHatch} />
        <path d="M594 266L641.500 220" strokeWidth="1.700" />
      </g>
      <path d="M300 110.500h3v3h-3zM300 186h3v3h-3zM640.500 110.500h3v3h-3zM640.500 375.500h3v3h-3z" fill="#e80000" />

      <Arrow x1={303} y1={112} x2={326} y2={112} color={GREEN} />
      <text x="330.500" y="115" fill="#3fd83f">Y</text>
      <Arrow x1={301.3} y1={114} x2={301.3} y2={137} color={BLUE} />
      <text x="299" y="146.500" fill={BLUE}>Z</text>

      <Arrow x1={220} y1={335} x2={245.5} y2={335} color={GREEN} />
      <Arrow x1={220} y1={335} x2={220} y2={361} color={BLUE} />
      <circle cx="220" cy="335" r="1.900" fill="#e00000" />
      <text x="249" y="337.500" fill="#33e033">Y</text>
      <text x="218" y="369.500" fill="#2a2aff">Z</text>

      <rect x="498.500" y="190" width="15" height="15" fill="#ffff55" />
      <Arrow x1={519} y1={168} x2={544.5} y2={168} color={GREEN} />
      <Arrow x1={519} y1={168} x2={519} y2={193} color={BLUE} />
      <Arrow x1={519} y1={168} x2={509.5} y2={191.5} color={GREEN} />
      <Arrow x1={519} y1={168} x2={495} y2={158.5} color={BLUE} />
      <circle cx="519" cy="168" r="3" fill="none" stroke="#800060" strokeWidth=".9" />
      <circle cx="519" cy="168" r="1.900" fill="#e00000" />
      <text x="549.500" y="171" fill="#33d033">y</text>
      <text x="518.300" y="203" fill="#2a2ae0">z</text>
      <text x="504.500" y="200.500" fontSize="8" fill="#2fc62f">u</text>
      <text x="488" y="159" fill="#2a2ae0">v</text>
      <text x="522.500" y="177" fontSize="8" fill="#700070" fontWeight="bold">C</text>

      <circle cx="620.700" cy="86.300" r="3.200" fill="none" stroke="#900070" strokeWidth=".9" />
      <circle cx="620.700" cy="86.300" r="1.200" fill="#e00000" />
      <text x="611.300" y="95.200" fill="#700080" stroke="#700080" strokeWidth=".5" fontWeight="bold">M</text>
    </svg>
  );
}

const rows = [
  ["Cross-sectional area", "A", "", "3.58", "2", ""],
  ["Moments of inertia", "I", "y", "15.56", "4", "about centroidal axes y, z"],
  ["", "I", "z", "42.55", "4", ""],
  ["", "I", "yz", "13.59", "4", ""],
  ["Inclination of principal axes", "α", "", "112.60", "°", "clockwise"],
  ["Principal moments of inertia", "I", "u", "48.21", "4", "about principal axes u, v in C"],
  ["", "I", "v", "9.91", "4", ""],
];

function Properties() {
  const cell = "border-r border-b border-[#a8a8a8]";
  const head = "border-r border-[#8a8a8a] p-0 font-normal";
  return (
    <section className="flex flex-none flex-col">
      <PanelHead title="4.1 Section Properties" />
      <div className="flex h-4 items-center bg-gradient-to-b from-[#f0f3f9] to-[#d9dfea] pl-[5px]"><Tools items={gridTools} /></div>
      <div className={`relative flex border-2 border-t-[#6c6c6c] border-r-[#707070] border-b-[#8c8c8c] border-l-[#8a8a8a] bg-[#f0f0f0] ${ARIAL}`}>
        <div className="min-w-0 flex-1 pb-[3px]">
          <table className="w-full table-fixed border-separate border-spacing-0 text-[7px] leading-[9px] text-black">
            <colgroup>
              <col className="w-[29px]" /><col className="w-[121px]" /><col className="w-[46px]" /><col className="w-[53px]" /><col className="w-[38px]" /><col />
            </colgroup>
            <thead>
              <tr className="h-[9px]">
                <th rowSpan={2} aria-label="Row" className={`${head} border-b border-b-[#6c6c6c] bg-[#e4e4e4]`} />
                {["A", "B", "C", "D", "E"].map((c) => (
                  <th key={c} className={`${head} border-b border-b-[#6c6c6c] ${c === "A" ? "bg-[#3397ff] text-white" : "bg-[#eeeeee]"}`}>{c}</th>
                ))}
              </tr>
              <tr className="h-[21px] align-bottom">
                {["Description", "Symbol", "Value", "Unit", "Comment"].map((c) => (
                  <th key={c} className={`${head} border-b border-b-[#8a8a8a] bg-[#eeeeee] pb-[2px]`}>{c}</th>
                ))}
              </tr>
            </thead>
            <tbody>
              {rows.map(([d, s, ix, v, u, c], i) => (
                <tr key={i} className="h-[10px] bg-white">
                  <td className={`border-r border-b border-[#888] p-0 ${i === 4 ? "bg-[#3397ff]" : "bg-[#e1e1e1]"}`} />
                  <td className={`${cell} px-[2px] py-0 whitespace-nowrap`}>{d}</td>
                  <td className={`${cell} px-[3px] py-0`}>{s}<span className="relative top-px ml-px">{ix}</span></td>
                  <td className={`${cell} px-[2px] py-0 text-right`}>{v}</td>
                  <td className={`${cell} px-[2px] py-0 whitespace-nowrap`}>{u === "°" ? "°" : <>cm<span className="relative -top-px">{u}</span></>}</td>
                  <td className={`${cell} px-[2px] py-0 whitespace-nowrap`}>{c}</td>
                </tr>
              ))}
            </tbody>
          </table>
        </div>
        <div className="flex w-[11px] flex-none flex-col items-center bg-[#f0f0f0] py-[2px]">
          <svg viewBox="0 0 6 6" className="h-[6px] w-[6px]"><path d="M1 4.500L3 2l2 2.500" fill="none" stroke="#444" strokeWidth="1.200" /></svg>
          <div className="mt-[2px] h-[10px] w-[10px] bg-[#cdcdcd]" />
          <svg viewBox="0 0 6 6" className="mt-auto mb-1 h-[6px] w-[6px]"><path d="M1 1.500L3 4l2-2.500" fill="none" stroke="#444" strokeWidth="1.200" /></svg>
        </div>
        <div className="pointer-events-none absolute top-[68px] left-[143px] h-[36px] w-[139px] border-2 border-[#0000f5] shadow-[2px_2px_2px_rgba(0,0,0,0.35)]" />
      </div>
      <div className={`flex h-[22px] items-start bg-[#f0f0f0] text-[7px] leading-[10px] text-black ${ARIAL}`}>
        {["Section Properties", "Statical Moments", "Warping Statical Moments"].map((t, i) => (
          <button key={t} className={`border-r border-b border-[#555] px-[2px] ${i === 0 ? "bg-[#f4f4f4]" : "bg-[#e6e6e6]"}`}>{t}</button>
        ))}
      </div>
    </section>
  );
}

function StatusBar() {
  return (
    <footer className={`flex h-[14px] flex-none items-center bg-gradient-to-b from-[#c9cfd9] via-[#a9b1bd] to-[#b4bac4] text-[7px] text-[#2c3340] ${ARIAL}`}>
      <div className="flex w-[556px] justify-end gap-[2px]">
        {["SNAP", "GRID", "CARTES", "OSNAP", "GLINES", "DXF"].map((t) => (
          <button key={t} className={`h-3 px-px leading-[11px] ${t === "GRID" ? "" : "border-t border-l border-[#6f7784] bg-[#b4bbc6]"}`}>{t}</button>
        ))}
      </div>
      <div className="ml-auto flex h-full w-[105px] gap-[46px]">
        <i className="w-px bg-[#98a0ad]" />
        <i className="w-px bg-[#98a0ad]" />
        <svg viewBox="0 0 8 8" className="mt-auto ml-auto h-2 w-2"><path d="M5.500 1.500h1.500M3 4h1.500M5.500 4H7M.5 6.500H2M3 6.500h1.500M5.500 6.500H7" stroke="#6b7380" strokeWidth="1.500" /></svg>
      </div>
    </footer>
  );
}

export default function App() {
  return (
    <div className="flex h-screen flex-col overflow-hidden border border-[#8f8f8f] bg-[#cfd3dd]">
      <TitleBar />
      <MenuBar />
      <div className="flex h-4 flex-none"><Strip items={bar1a} /><Strip items={bar1b} /></div>
      <div className="flex h-4 flex-none"><Strip items={bar2a} /><Strip items={bar2b} /><Strip items={bar2c} /></div>
      <div className="flex min-h-0 flex-1 gap-1 pt-[2px] pl-px">
        <Navigator />
        <main className="flex min-w-0 flex-1 flex-col">
          <div className={`relative flex min-h-0 flex-1 flex-col justify-between border-t border-l border-[#666b75] bg-white px-[3px] pt-1 pb-[3px] text-[7px] leading-[8px] text-black ${ARIAL}`}>
            <Plot />
            <p>Statical Moments Q-v [cm^3]</p>
            <p>Max Q-v: 0.89, Min Q-v: -1.61 cm^3</p>
          </div>
          <div className="h-[5px] flex-none" />
          <Properties />
        </main>
      </div>
      <StatusBar />
    </div>
  );
}
